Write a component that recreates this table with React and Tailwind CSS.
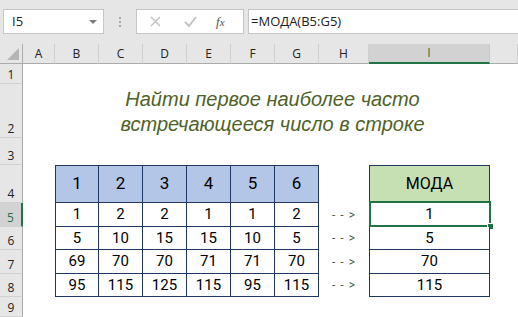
import React from 'react'

const COLS = ['A', 'B', 'C', 'D', 'E', 'F', 'G', 'H', 'I', '']
const ROW_H = ['h-[20px]', 'h-[54px]', 'h-[27px]', 'h-[38px]', 'h-[20px]', 'h-[20px]', 'h-[20px]', 'h-[20px]', 'h-[20px]', 'h-[20px]']

const data = [
  [1, 2, 2, 1, 1, 2],
  [5, 10, 15, 15, 10, 5],
  [69, 70, 70, 71, 71, 70],
  [95, 115, 125, 115, 95, 115],
]
const modes = [1, 5, 70, 115]

const ui = { fontFamily: '"Open Sans", "Noto Sans", sans-serif' }
const cellFont = { fontFamily: 'Roboto, "Liberation Sans", sans-serif' }

function RowHeader({ n, active }) {
  return (
    <div
      className={
        'flex items-end justify-center pb-[2px] text-[12px] leading-none border-b border-[#d0d0d0] ' +
        (active
          ? 'bg-[#d2d2d2] text-[#217346] border-r-2 border-r-[#217346]'
          : 'bg-[#e6e6e6] text-[#222] border-r border-r-[#ababab]')
      }
      style={ui}
    >
      {n}
    </div>
  )
}

function NumCell({ v, first, head }) {
  return (
    <div
      className={
        'flex items-center justify-center border-r border-b border-[#1f3864] text-black ' +
        (first ? 'border-l ' : '') +
        (head ? 'border-t bg-[#b4c6e7] text-[17px]' : 'bg-white text-[15px]')
      }
      style={cellFont}
    >
      {v}
    </div>
  )
}

function Arrow() {
  return (
    <div className="flex items-center justify-center text-[12px] text-[#4a6040] tracking-[1px]" style={cellFont}>
      - - &gt;
    </div>
  )
}

export default function App() {
  return (
    <div className="w-[518px] h-[317px] overflow-hidden bg-white select-none">
      {/* formula bar */}
      <div className="h-[44px] bg-[#e6e6e6] flex items-start pt-[9px] pl-[3px]">
        <div className="w-[101px] h-[25px] bg-white border border-[#c6c6c6] flex items-center justify-between pl-[8px] pr-[6px]">
          <span className="text-[13px] text-[#222]" style={ui}>I5</span>
          <span className="w-0 h-0 border-l-[4px] border-r-[4px] border-t-[4px] border-l-transparent border-r-transparent border-t-[#7a7a7a]" />
        </div>
        <div className="w-[32px] h-[25px] flex flex-col items-center justify-center gap-[2px]">
          <span className="w-[2px] h-[2px] bg-[#a8a8a8]" />
          <span className="w-[2px] h-[2px] bg-[#a8a8a8]" />
          <span className="w-[2px] h-[2px] bg-[#a8a8a8]" />
        </div>
        <div className="w-[108px] h-[25px] bg-white border border-[#c6c6c6] flex items-center">
          <svg className="ml-[13px]" width="11" height="11" viewBox="0 0 11 11">
            <path d="M1 1 L10 10 M10 1 L1 10" stroke="#c0c0c0" strokeWidth="1.3" fill="none" />
          </svg>
          <svg className="ml-[23px]" width="13" height="11" viewBox="0 0 13 11">
            <path d="M1 6 L5 10 L12 1" stroke="#c4c4c4" strokeWidth="2" fill="none" />
          </svg>
          <span className="ml-[19px] text-[13px] italic text-[#555]" style={{ fontFamily: '"Liberation Serif", serif' }}>
            f<span className="text-[11px]">x</span>
          </span>
        </div>
        <div className="flex-1 ml-[4px] h-[25px] bg-white border border-r-0 border-[#c6c6c6] flex items-center pl-[2px]">
          <span className="text-[13px] text-[#222]" style={ui}>=МОДА(B5:G5)</span>
        </div>
      </div>

      {/* sheet */}
      <div className="grid grid-cols-[23px_32px_44px_44px_44px_44px_44px_44px_50px_121px_1fr]">
        {/* column headers */}
        <div className="h-[20px] bg-[#e6e6e6] border-r border-b border-[#ababab] relative">
          <svg className="absolute right-[3px] bottom-[3px]" width="12" height="12" viewBox="0 0 12 12">
            <path d="M12 0 L12 12 L0 12 Z" fill="#b5b5b5" />
          </svg>
        </div>
        {COLS.map((c, i) => (
          <div
            key={i}
            className={
              'h-[20px] flex items-center justify-center text-[12px] ' +
              (c === 'I'
                ? 'bg-[#d2d2d2] text-[#217346] border-b-2 border-[#217346] border-r border-r-[#c8c8c8]'
                : 'bg-[#e6e6e6] text-[#222] border-b border-[#ababab] border-r border-r-[#d0d0d0]')
            }
            style={ui}
          >
            {c}
          </div>
        ))}

        {/* row 1 */}
        <RowHeader n={1} />
        <div className={ROW_H[0] + ' col-span-10'} />

        {/* row 2 - title */}
        <RowHeader n={2} />
        <div className={ROW_H[1]} />
        <div
          className="col-span-8 flex flex-col items-center justify-center text-[20px] leading-[25px] italic text-[#4f6228] pt-[2px]"
          style={{ fontFamily: '"Liberation Sans", Arial, sans-serif' }}
        >
          <span>Найти первое наиболее часто</span>
          <span>встречающееся число в строке</span>
        </div>
        <div />

        {/* row 3 */}
        <RowHeader n={3} />
        <div className={ROW_H[2] + ' col-span-10'} />

        {/* row 4 - headers */}
        <RowHeader n={4} />
        <div className={ROW_H[3]} />
        {[1, 2, 3, 4, 5, 6].map((v, i) => (
          <NumCell key={i} v={v} first={i === 0} head />
        ))}
        <div />
        <div className="flex items-center justify-center border border-[#1f3864] bg-[#c6e0b4] text-[16px] text-black" style={cellFont}>
          МОДА
        </div>
        <div />

        {/* rows 5-8 */}
        {data.map((row, r) => (
          <React.Fragment key={r}>
            <RowHeader n={5 + r} active={r === 0} />
            <div className={ROW_H[4 + r]} />
            {row.map((v, i) => (
              <NumCell key={i} v={v} first={i === 0} />
            ))}
            <Arrow />
            <div
              className="relative flex items-center justify-center border-l border-r border-b border-[#1f3864] bg-white text-[15px] text-black"
              style={cellFont}
            >
              {modes[r]}
              {r === 0 && (
                <div className="absolute -left-px -top-[2px] -right-[2px] -bottom-px border-2 border-[#217346]">
                  <div className="absolute -right-[5px] -bottom-[5px] w-[7px] h-[7px] bg-[#217346] border border-white" />
                </div>
              )}
            </div>
            <div />
          </React.Fragment>
        ))}

        {/* rows 9-10 */}
        <RowHeader n={9} />
        <div className="h-[20px] col-span-10" />
        <RowHeader n={10} />
        <div className="h-[20px] col-span-10" />
      </div>
    </div>
  )
}
